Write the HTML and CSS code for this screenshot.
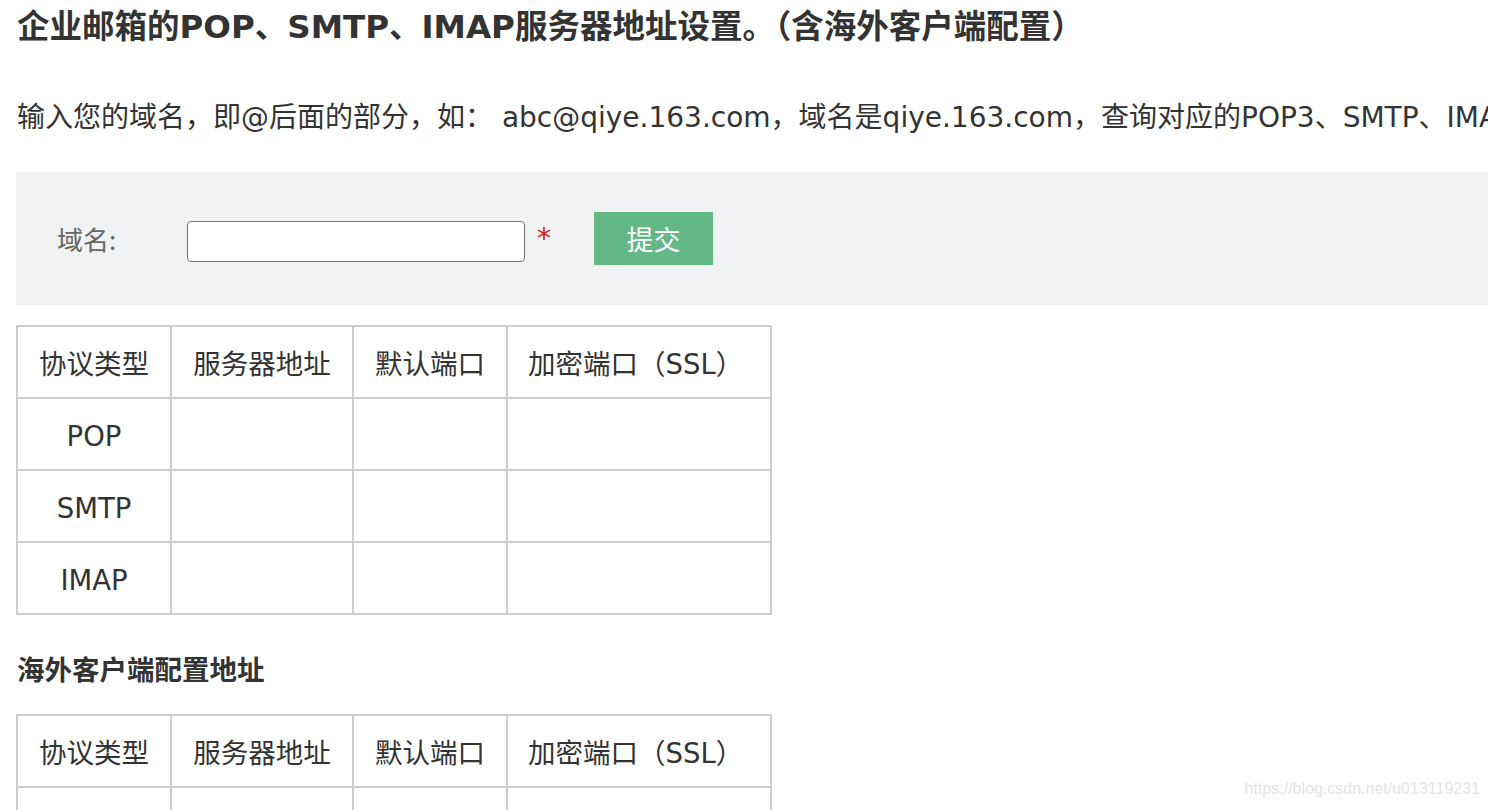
FILE: index.html
```html
<!DOCTYPE html>
<html lang="zh-CN">
<head>
<meta charset="utf-8">
<title>企业邮箱服务器地址设置</title>
<link rel="stylesheet" href="styles.css">
</head>
<body>
<div class="page">
  <h1 class="title">企业邮箱的POP、SMTP、IMAP服务器地址设置。（含海外客户端配置）</h1>
  <p class="intro">输入您的域名，即@后面的部分，如： abc@qiye.163.com，域名是qiye.163.com，查询对应的POP3、SMTP、IMAP服务器地址</p>
  <div class="form-box">
    <label class="label">域名:</label>
    <input class="domain-input" type="text">
    <span class="required">*</span>
    <button class="submit">提交</button>
  </div>
  <table class="server-table">
    <tr><th>协议类型</th><th>服务器地址</th><th>默认端口</th><th>加密端口（SSL）</th></tr>
    <tr><td>POP</td><td></td><td></td><td></td></tr>
    <tr><td>SMTP</td><td></td><td></td><td></td></tr>
    <tr><td>IMAP</td><td></td><td></td><td></td></tr>
  </table>
  <h2 class="sub-title">海外客户端配置地址</h2>
  <table class="server-table">
    <tr><th>协议类型</th><th>服务器地址</th><th>默认端口</th><th>加密端口（SSL）</th></tr>
    <tr><td>POP</td><td></td><td></td><td></td></tr>
    <tr><td>SMTP</td><td></td><td></td><td></td></tr>
    <tr><td>IMAP</td><td></td><td></td><td></td></tr>
  </table>
</div>
<div class="watermark">https://blog.csdn.net/u013119231</div>
</body>
</html>
```
FILE: styles.css
```css
html, body {
  margin: 0;
  padding: 0;
  background: #fff;
  overflow: hidden;
  height: 810px;
}
body {
  font-family: "DejaVu Sans", "Noto Sans CJK SC", sans-serif;
  color: #333;
}
.page {
  padding-left: 16px;
  width: 1800px;
}
.title {
  margin: 0;
  padding-top: 6px;
  padding-left: 1px;
  font-size: 32.5px;
  line-height: 42px;
  font-weight: bold;
  color: #333;
  white-space: nowrap;
}
.intro {
  margin: 50px 0 0 1px;
  font-size: 28px;
  line-height: 40px;
  color: #333;
  white-space: nowrap;
}
.form-box {
  margin-top: 34px;
  height: 133px;
  background: #f1f2f4;
  display: flex;
  align-items: center;
  padding-left: 41px;
}
.label {
  font-size: 26px;
  color: #666;
  width: 130px;
  font-family: "Noto Sans CJK SC", sans-serif;
}
.domain-input {
  width: 338px;
  height: 41px;
  box-sizing: border-box;
  border: 1.5px solid #767676;
  border-radius: 4px;
  background: #fff;
  margin: 5px 0 0 0;
  padding: 0 8px;
}
.required {
  color: #d0201a;
  font-size: 28px;
  margin-left: 12px;
  width: 57px;
  line-height: 26px;
}
.submit {
  width: 119px;
  height: 53px;
  border: none;
  background: #63b886;
  color: #fff;
  font-family: "Noto Sans CJK SC", sans-serif;
  font-size: 27px;
  padding: 0;
  border-radius: 0;
  margin-top: -1px;
}
.server-table {
  margin-top: 20px;
  border-collapse: collapse;
  font-size: 27.5px;
  color: #333;
}
.server-table th, .server-table td {
  border: 2px solid #cdcdcd;
  height: 72px;
  padding: 0 20px;
  font-weight: normal;
  text-align: center;
  box-sizing: border-box;
}
.server-table td {
  padding-top: 3px;
}
.server-table th:nth-child(1) { width: 154px; }
.server-table th:nth-child(2) { width: 182px; }
.server-table th:nth-child(3) { width: 154px; }
.server-table th:nth-child(4) { width: 264px; text-align: left; }
.sub-title {
  margin: 36px 0 0 1px;
  font-size: 27.5px;
  line-height: 38px;
  font-weight: bold;
  color: #333;
}
.sub-title + .server-table {
  margin-top: 25px;
}
.watermark {
  position: absolute;
  right: 8px;
  top: 780px;
  font-family: "Liberation Sans", Arial, sans-serif;
  font-size: 16px;
  color: #e4e4e4;
}
```
